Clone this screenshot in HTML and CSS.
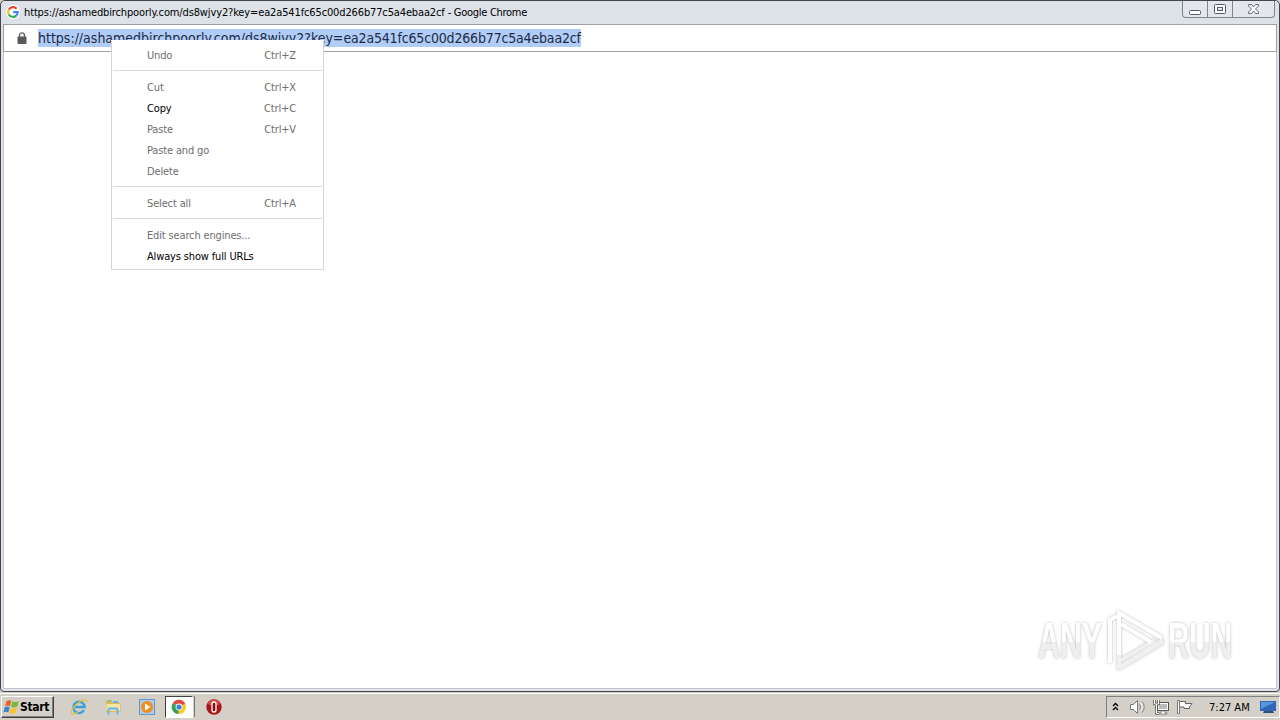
FILE: index.html
```html
<!DOCTYPE html>
<html lang="en">
<head>
    <meta charset="UTF-8">
    <title>Google Chrome</title>
    <link rel="stylesheet" href="styles.css">
</head>
<body>
    <div class="desktop">
        <div class="window">
            <div class="titlebar">
                <svg class="favicon" width="14" height="14" viewBox="0 0 14 14">
                    <circle cx="7" cy="7" r="7" fill="#fff"/>
                    <g fill="none" stroke-width="2.1">
                        <path d="M10.6 3.7A4.8 4.8 0 0 0 2.8 4.6" stroke="#ea4335"/>
                        <path d="M2.8 4.6A4.8 4.8 0 0 0 2.8 9.4" stroke="#fbbc05"/>
                        <path d="M2.8 9.4A4.8 4.8 0 0 0 10.2 10.6" stroke="#34a853"/>
                        <path d="M10.2 10.6A4.8 4.8 0 0 0 11.8 7.1H7.2" stroke="#4285f4"/>
                    </g>
                </svg>
                <span class="title">https://ashamedbirchpoorly.com/ds8wjvy2?key=ea2a541fc65c00d266b77c5a4ebaa2cf <span class="app">- Google Chrome</span></span>
                <div class="controls">
                    <div class="control"><svg width="24" height="16" viewBox="0 0 24 16"><rect x="6.5" y="9.5" width="11" height="4" rx="1" fill="#fff" stroke="#555b68"/></svg></div>
                    <div class="control"><svg width="24" height="16" viewBox="0 0 24 16"><rect x="6.5" y="3.5" width="11" height="9" rx="1" fill="#fff" stroke="#555b68"/><rect x="9.5" y="6.5" width="5" height="3" fill="#e4e6ee" stroke="#555b68"/></svg></div>
                    <div class="control wide"><svg width="41" height="16" viewBox="0 0 41 16"><path d="M15.5 3.5h3l2 2.500 2-2.500h3v1.500l-3 3 3 3v1.500h-3l-2-2.500-2 2.500h-3v-1.500l3-3-3-3z" fill="#fff" stroke="#666b78"/></svg></div>
                </div>
            </div>
            <div class="addressbar">
                <svg class="lock" width="10" height="12" viewBox="0 0 10 12">
                    <path d="M2.500 5V3.300a2.500 2.500 0 0 1 5 0V5" fill="none" stroke="#5f6368" stroke-width="1.300"/>
                    <rect x="0.500" y="4.500" width="9" height="7.500" rx="1" fill="#5a5a5a"/>
                </svg>
                <span class="url"><span class="host">https://ashamedbirchpoorly.com/ds8wjvy2?key=</span>ea2a541fc65c00d266b77c5a4ebaa2cf</span>
            </div>
            <div class="page"></div>
        </div>

        <div class="taskbar">
            <div class="start">
                <svg width="17" height="16" viewBox="0 0 17 16">
                    <path d="M3.500 2.200C5.500.8 7 1 8.300 1.900L7 7.200C5.400 6.200 4 6.300 2 7.300z" fill="#e8622c"/>
                    <path d="M9.300 2.300c2 1.200 4 1 6.500-.2l-1.500 5.400c-2.200 1.200-4.200 1.200-6.300.2z" fill="#7cb83e"/>
                    <path d="M1.700 8.300c2-1.200 3.600-1.100 5-.1l-1.400 5.300c-1.600-1.100-3-1.100-5 0z" fill="#3c83cf"/>
                    <path d="M7.700 8.800c2 1.100 4 1 6.300-.2l-1.500 5.400c-2.200 1.100-4.200 1.200-6.200.1z" fill="#f5c433"/>
                </svg>
                <span>Start</span>
            </div>
            <div class="quick">
                <svg width="18" height="18" viewBox="0 0 18 18">
                    <path d="M14 12.200A5.700 5.700 0 1 1 14.700 9H5" fill="none" stroke="#3aa0dc" stroke-width="2.400"/>
                    <path d="M2.200 16C-.6 14 4.500 6.600 10 3.500c3.700-2.300 7-2.400 6.600.8M2.200 16c2 .6 4-.6 6-2" fill="none" stroke="#e9bd3c" stroke-width="1.300"/>
                </svg>
            </div>
            <div class="quick">
                <svg width="18" height="18" viewBox="0 0 18 18">
                    <path d="M2 3h5l1 1.500h8.500V14H2z" fill="#dfba58"/>
                    <path d="M3.500 2h4v2h-4z" fill="#8fc36c"/>
                    <path d="M9 3h5v2H9z" fill="#6fb0dc"/>
                    <path d="M2.500 6h13.500v7H2.500z" fill="#f8e6a0"/>
                    <path d="M4.500 16.500v-4.500q0-1.500 1.500-1.500h6q1.500 0 1.500 1.500v4.500" fill="none" stroke="#79b9e2" stroke-width="2.400"/>
                </svg>
            </div>
            <div class="quick">
                <svg width="18" height="18" viewBox="0 0 18 18">
                    <rect x="1.500" y="1.500" width="15" height="15" fill="#a9cdec" stroke="#6797c4"/>
                    <circle cx="9" cy="9" r="6" fill="#f28c1e"/>
                    <path d="M7 5.500l5.500 3.500L7 12.500z" fill="#fff"/>
                </svg>
            </div>
            <div class="quick active">
                <svg width="16" height="16" viewBox="0 0 16 16">
                    <path d="M8 8L1.700 4.360A7 7 0 0 1 14.200 4.800z" fill="#e24a3b"/>
                    <path d="M8 8L14.200 4.800A7 7 0 0 1 7.600 15z" fill="#fbc926"/>
                    <path d="M8 8L7.600 15A7 7 0 0 1 1.700 4.360z" fill="#35a456"/>
                    <circle cx="8" cy="8" r="3.400" fill="#fff"/>
                    <circle cx="8" cy="8" r="2.600" fill="#3f7fe0"/>
                </svg>
            </div>
            <div class="edge"></div>
            <div class="quick opera">
                <svg width="16" height="16" viewBox="0 0 16 16">
                    <circle cx="8" cy="8" r="7.700" fill="#a91619"/>
                    <path d="M1.500 5A7 7 0 0 1 14.500 5Q8 8 1.500 5" fill="#d04a48"/>
                    <rect x="6" y="3" width="4" height="10" rx="2" fill="#8c0d11" stroke="#fff" stroke-width="1.300"/>
                </svg>
            </div>
            <div class="tray">
                <svg class="chevrons" width="7" height="10" viewBox="0 0 7 10">
                    <path d="M1 4l2.500-2.500L6 4M1 8l2.500-2.500L6 8" fill="none" stroke="#000" stroke-width="1.400"/>
                </svg>
                <svg class="sound" width="17" height="16" viewBox="0 0 17 16">
                    <path d="M1.500 5.500h3l4-4v13l-4-4h-3z" fill="#fff" stroke="#777"/>
                    <path d="M10.500 5q2 3 0 6M13 2.500q4.500 5.500 0 11" fill="none" stroke="#888"/>
                    <path d="M12 4q3 4 0 8" fill="none" stroke="#fff"/>
                </svg>
                <svg class="network" width="17" height="16" viewBox="0 0 17 16">
                    <rect x="4.500" y="3.500" width="11" height="8" fill="#bbb" stroke="#555"/>
                    <rect x="5.500" y="4.500" width="9" height="6" fill="none" stroke="#fff"/>
                    <path d="M8 12h4v2h2v1H6v-1h2z" fill="#fff" stroke="#666" stroke-width=".7"/>
                    <path d="M1.500 1v4h4V1M3.500 5v9.500H6" fill="none" stroke="#555" stroke-width="2.400"/>
                    <path d="M1.500 1v4h4V1M3.500 5v9.500H6" fill="none" stroke="#fff"/>
                </svg>
                <svg class="flag" width="17" height="16" viewBox="0 0 17 16">
                    <path d="M3.500 2.500h6v2h6.500l-2.500 3.500 0 1.500H8v-1.500H3.500z" fill="#fff" stroke="#666"/>
                    <path d="M1.500 1.500h2v13h-2z" fill="#fff" stroke="#777"/>
                </svg>
                <span class="clock">7:27 AM</span>
                <svg class="show-desktop" width="16" height="14" viewBox="0 0 16 14">
                    <path d="M0 1h16v10H0z" fill="#2f66b8"/>
                    <path d="M1 2h14L1 9z" fill="#5a96da"/>
                    <path d="M4 11h9l1 2H3z" fill="#2c4d7d"/>
                </svg>
            </div>
        </div>

        <!-- Context menu -->
        <div class="menu">
            <div class="item"><span>Undo</span><span>Ctrl+Z</span></div>
            <div class="separator"></div>
            <div class="item"><span>Cut</span><span>Ctrl+X</span></div>
            <div class="item enabled"><span>Copy</span><span class="shortcut">Ctrl+C</span></div>
            <div class="item"><span>Paste</span><span>Ctrl+V</span></div>
            <div class="item"><span>Paste and go</span></div>
            <div class="item"><span>Delete</span></div>
            <div class="separator"></div>
            <div class="item"><span>Select all</span><span>Ctrl+A</span></div>
            <div class="separator"></div>
            <div class="item"><span>Edit search engines...</span></div>
            <div class="item enabled"><span>Always show full URLs</span></div>
        </div>

        <!-- Watermark -->
        <svg class="watermark" width="216" height="72" viewBox="0 0 216 72">
            <defs>
                <linearGradient id="fade" gradientUnits="userSpaceOnUse" x1="0" y1="0" x2="0" y2="64">
                    <stop offset=".52" stop-color="#fff"/>
                    <stop offset=".52" stop-color="#efefef"/>
                </linearGradient>
            </defs>
            <text class="word" x="1" y="49" textLength="64" lengthAdjust="spacingAndGlyphs" fill="url(#fade)">ANY</text>
            <text class="word" x="131" y="49" textLength="64" lengthAdjust="spacingAndGlyphs" fill="url(#fade)">RUN</text>
            <g fill="none" stroke="#f0f0f0" stroke-width="4">
                <path d="M82 44l0 14 44-27M84 60l0-2 42-25M118 31L83 52"/>
            </g>
            <g fill="none" stroke="#fff" stroke-width="4">
                <path d="M73 54V11l7-4"/>
                <path d="M82 46V4l43 25"/>
                <path d="M84 15l30 18"/>
            </g>
        </svg>
    </div>
</body>
</html>
```
FILE: styles.css
```css
body {
    margin: 0;
    font-family: "DejaVu Sans Condensed", "DejaVu Sans", sans-serif;
    font-size: 11px;
    color: #000;
}

svg {
    display: block;
    flex: none;
}

.desktop {
    position: relative;
    display: flex;
    flex-direction: column;
    width: 1280px;
    height: 720px;
    overflow: hidden;
    background: #d4d0c8;
}

/* Browser window */
.window {
    display: flex;
    flex-direction: column;
    box-sizing: border-box;
    height: 692px;
    padding: 0 2px 2px;
    border: 1px solid #42454c;
    border-radius: 5px 5px 4px 4px;
    background: #dfe3e9;
}

.titlebar {
    display: flex;
    height: 23px;
    padding-left: 3px;
    background: #dde1e8;
}

.favicon {
    margin-top: 4px;
}

.title {
    margin-left: 4px;
    line-height: 23px;
    letter-spacing: -0.135px;
    white-space: nowrap;
}

.app {
    letter-spacing: -0.28px;
}

.controls {
    display: flex;
    height: 16px;
    margin-left: auto;
    margin-right: 2px;
    border: 1px solid #80848e;
    border-top: 0;
    border-radius: 0 0 4px 4px;
    background: #e3e6ed;
}

.control {
    width: 24px;
    border-right: 1px solid #80848e;
}

.control.wide {
    width: 41px;
    border-right: 0;
}

.addressbar {
    display: flex;
    align-items: flex-start;
    box-sizing: border-box;
    height: 28px;
    padding-left: 13px;
    border: 1px solid #a0a0a0;
    background: #fff;
}

.lock {
    margin-top: 7px;
}

.url {
    height: 18px;
    margin: 4px 0 0 11px;
    background: #b1ccf6;
    color: #1c2b45;
    font-size: 14px;
    line-height: 18px;
    letter-spacing: -0.17px;
    white-space: nowrap;
}

.host {
    letter-spacing: -0.005px;
}

.page {
    flex: 1;
    border: 1px solid #c4c6ca;
    border-top: 0;
    background: #fff;
}

/* Context menu */
.menu {
    position: absolute;
    left: 111px;
    top: 40px;
    box-sizing: border-box;
    width: 213px;
    height: 230px;
    padding-top: 4px;
    border: 1px solid #d5d5d5;
    border-top-color: #fff;
    background: #fff;
}

.item {
    display: flex;
    justify-content: space-between;
    height: 21px;
    padding: 0 27px 0 35px;
    color: #6e6e6e;
    line-height: 21px;
    letter-spacing: -0.15px;
}

.enabled {
    color: #000;
}

.shortcut {
    color: #6e6e6e;
}

.separator {
    height: 1px;
    margin: 4px 1px 6px;
    background: #dadada;
}

/* Taskbar */
.taskbar {
    display: flex;
    align-items: flex-start;
    box-sizing: border-box;
    height: 28px;
    padding: 3px 0 0 1px;
    border-top: 1px solid #d4d0c8;
    box-shadow: inset 0 1px #fff;
    background: #d4d0c8;
}

.start {
    display: flex;
    align-items: center;
    box-sizing: border-box;
    width: 53px;
    height: 22px;
    padding-left: 1px;
    border: 1px solid;
    border-color: #fff #404040 #404040 #fff;
    box-shadow: inset -1px -1px #808080;
    font-size: 12px;
    font-weight: bold;
    letter-spacing: -0.3px;
}

.quick {
    display: flex;
    align-items: center;
    justify-content: center;
    width: 18px;
    height: 22px;
    margin-left: 16px;
}

.quick.active {
    box-sizing: border-box;
    width: 28px;
    margin-left: 9px;
    border: 1px solid;
    border-color: #404040 #fff #fff #404040;
    background: #fff;
}

.edge {
    width: 1px;
    height: 21px;
    margin-left: 1px;
    background: #777;
}

.quick.opera {
    margin-left: 10px;
}

.tray {
    display: flex;
    align-items: center;
    box-sizing: border-box;
    width: 174px;
    height: 22px;
    margin-left: auto;
    padding-left: 5px;
    border: 1px solid;
    border-color: #808080 #fff #fff #808080;
}

.sound {
    margin-left: 10px;
}

.network {
    margin-left: 7px;
}

.flag {
    margin-left: 6px;
}

.clock {
    width: 43px;
    margin-left: 16px;
    white-space: nowrap;
}

.show-desktop {
    margin-left: 8px;
}

/* Watermark */
.watermark {
    position: absolute;
    left: 1037px;
    top: 609px;
    filter: drop-shadow(0 0 1.5px #bbb);
}

.word {
    font-family: "Liberation Sans", sans-serif;
    font-size: 50px;
    font-weight: bold;
}
```
